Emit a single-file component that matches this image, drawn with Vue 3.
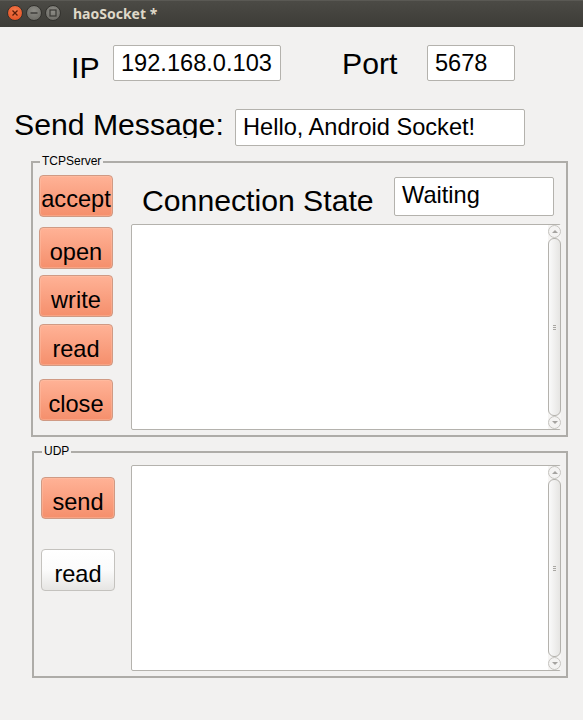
<script setup>
const tcpButtons = [
  { label: 'accept', cls: 'b-accept' },
  { label: 'open', cls: 'b-open' },
  { label: 'write', cls: 'b-write' },
  { label: 'read', cls: 'b-read' },
  { label: 'close', cls: 'b-close' }
]
</script>

<template>
  <div class="win">
    <header class="titlebar">
      <div class="ctl close-ctl">
        <svg width="10" height="10" viewBox="0 0 10 10"><path d="M2.5 2.5l5 5M7.5 2.5l-5 5" stroke="#5a1d08" stroke-width="1.3" /></svg>
      </div>
      <div class="ctl">
        <svg width="10" height="10" viewBox="0 0 10 10"><path d="M1.5 5h7" stroke="#3a3935" stroke-width="1.4" /></svg>
      </div>
      <div class="ctl">
        <svg width="10" height="10" viewBox="0 0 10 10"><rect x="2" y="2" width="6" height="6" fill="none" stroke="#3a3935" stroke-width="1.2" /></svg>
      </div>
      <span class="title">haoSocket *</span>
    </header>

    <div class="row-ip">
      <span class="lbl ip-lbl">IP</span>
      <div class="field ip-field">192.168.0.103</div>
      <span class="lbl port-lbl">Port</span>
      <div class="field port-field">5678</div>
    </div>

    <div class="row-msg">
      <span class="lbl msg-lbl">Send Message:</span>
      <div class="field msg-field">Hello, Android Socket!</div>
    </div>

    <section class="group tcp">
      <span class="legend">TCPServer</span>
      <div class="btns">
        <button v-for="b in tcpButtons" :key="b.label" class="btn" :class="b.cls">{{ b.label }}</button>
      </div>
      <div class="main">
        <div class="state-row">
          <span class="lbl state-lbl">Connection State</span>
          <div class="field state-field">Waiting</div>
        </div>
        <div class="textbox tcp-box">
          <div class="sbar">
            <div class="arrow"><i class="tri up"></i></div>
            <div class="thumb"><i class="grip"></i></div>
            <div class="arrow"><i class="tri down"></i></div>
          </div>
        </div>
      </div>
    </section>

    <section class="group udp">
      <span class="legend udp-legend">UDP</span>
      <div class="btns udp-btns">
        <button class="btn">send</button>
        <button class="btn white">read</button>
      </div>
      <div class="textbox udp-box">
        <div class="sbar">
          <div class="arrow"><i class="tri up"></i></div>
          <div class="thumb"><i class="grip"></i></div>
          <div class="arrow"><i class="tri down"></i></div>
        </div>
      </div>
    </section>
  </div>
</template>

<style>
html, body {
  margin: 0;
  background: #f2f1f0;
}
</style>

<style scoped>
.win {
  width: 583px;
  height: 720px;
  overflow: hidden;
  background: #f2f1f0;
  font-family: "Liberation Sans", Arial, sans-serif;
  color: #000;
}

.titlebar {
  height: 27px;
  box-sizing: border-box;
  padding: 0 0 2px 7px;
  display: flex;
  align-items: center;
  gap: 3px;
  background: linear-gradient(#4b4a45, #3d3c37);
  border-top: 1px solid #5a5954;
}

.ctl {
  box-sizing: content-box;
  width: 14px;
  height: 14px;
  border-radius: 50%;
  background: radial-gradient(circle at 50% 35%, #8d8c86, #66655f);
  border: 1px solid #33322e;
  display: flex;
  align-items: center;
  justify-content: center;
}

.close-ctl {
  background: radial-gradient(circle at 50% 35%, #f47a4c, #df4a1c);
}

.title {
  margin-left: 9px;
  font-family: "Noto Sans", "Open Sans", sans-serif;
  font-weight: 700;
  font-size: 14px;
  color: #dfd8c8;
}

.lbl {
  font-size: 30.2px;
  line-height: 36px;
  white-space: nowrap;
}

.field {
  box-sizing: border-box;
  background: #fff;
  border: 1px solid #b4b2ad;
  border-radius: 2px;
  font-size: 23.6px;
  padding-left: 7px;
  display: flex;
  align-items: center;
}

.row-ip {
  display: flex;
  align-items: flex-start;
  margin-top: 18px;
  padding-left: 71px;
  height: 36px;
}

.ip-lbl {
  width: 42px;
  margin-top: 5px;
}

.ip-field {
  width: 168px;
  height: 36px;
}

.port-lbl {
  width: 85px;
  margin-left: 61px;
  margin-top: 1px;
}

.port-field {
  width: 88px;
  height: 36px;
}

.row-msg {
  display: flex;
  align-items: flex-start;
  margin-top: 28px;
  padding-left: 14px;
  height: 37px;
}

/* the label is cut just under the baseline, same as in the app */
.msg-lbl {
  width: 221px;
  height: 29px;
  overflow: hidden;
  line-height: 32px;
}

.msg-field {
  width: 290px;
  height: 37px;
}

.group {
  position: relative;
  box-sizing: border-box;
  border: 2px solid #aeaca8;
  display: flex;
}

.legend {
  position: absolute;
  top: -8px;
  left: 7px;
  padding: 0 2px;
  background: #f2f1f0;
  font-size: 12px;
  line-height: 13px;
}

.udp-legend {
  left: 8px;
}

.tcp {
  margin: 15px 0 0 31px;
  width: 537px;
  height: 276px;
  padding: 12px 5px 0 6px;
}

.udp {
  margin: 14px 0 0 32px;
  width: 536px;
  height: 227px;
  padding: 12px 5px 0 7px;
}

.btns {
  width: 74px;
  flex: none;
  display: flex;
  flex-direction: column;
}

.udp-btns {
  padding-top: 12px;
  gap: 30px;
}

.btn {
  display: block;
  box-sizing: border-box;
  width: 74px;
  height: 42px;
  padding: 7px 0 0;
  border: 1px solid #d09a84;
  border-radius: 4px;
  background: linear-gradient(#ffb296, #f58f6c);
  box-shadow: inset 0 0 0 1px rgba(255, 200, 175, 0.35);
  font-family: "Liberation Sans", Arial, sans-serif;
  font-size: 23.6px;
  line-height: 34px;
  color: #000;
}

.white {
  border-color: #c4c2be;
  background: linear-gradient(#ffffff, #fbfbfb 50%, #e6e5e3);
  box-shadow: none;
}

.b-accept { padding-top: 6px; }
.b-open { margin-top: 10px; }
.b-write { margin-top: 6px; }
.b-read { margin-top: 7px; }
.b-close { margin-top: 13px; }

.main {
  margin-left: 18px;
  flex: none;
  width: 430px;
}

.state-row {
  display: flex;
  height: 49px;
  padding-left: 11px;
}

.state-lbl {
  width: 252px;
  margin-top: 8px;
}

.state-field {
  width: 160px;
  height: 39px;
  margin-top: 2px;
  padding-bottom: 3px;
}

.textbox {
  position: relative;
  box-sizing: border-box;
  width: 430px;
  background: #fff;
  border: 1px solid #b4b2ad;
  border-radius: 2px;
}

.tcp-box {
  height: 206px;
}

.udp-box {
  margin-left: 16px;
  height: 206px;
}

.sbar {
  position: absolute;
  top: 0;
  right: -1px;
  bottom: 0;
  width: 13px;
  display: flex;
  flex-direction: column;
  background: #f6f5f4;
}

.arrow {
  flex: none;
  box-sizing: border-box;
  width: 13px;
  height: 13px;
  border: 1px solid #c6c4c0;
  border-radius: 50%;
  background: #f4f3f2;
  display: flex;
  align-items: center;
  justify-content: center;
}

.tri {
  width: 0;
  height: 0;
  border-left: 3px solid transparent;
  border-right: 3px solid transparent;
}

.tri.up {
  border-bottom: 3px solid #a5a3a0;
}

.tri.down {
  border-top: 3px solid #a5a3a0;
}

.thumb {
  flex: 1;
  box-sizing: border-box;
  border: 1px solid #b4b2ad;
  border-radius: 6px;
  background: linear-gradient(90deg, #fafafa, #e6e5e3);
  display: flex;
  align-items: center;
  justify-content: center;
}

.grip {
  width: 3px;
  height: 5px;
  background: repeating-linear-gradient(#a9a7a3 0 1px, transparent 1px 2px);
}
</style>
